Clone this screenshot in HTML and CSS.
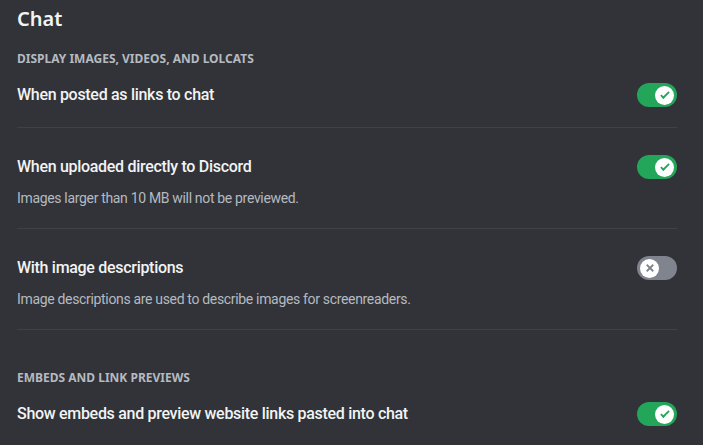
FILE: index.html
```html
<!DOCTYPE html>
<html lang="en">
<head>
<meta charset="utf-8">
<title>Chat settings</title>
<link rel="stylesheet" href="styles.css">
</head>
<body>
<main class="page">
  <h2 class="page-title">Chat</h2>

  <h5 class="section-title">Display images, videos, and lolcats</h5>

  <div class="setting">
    <div class="setting-row">
      <span class="setting-label">When posted as links to chat</span>
      <span class="switch on">
        <span class="knob">
          <svg class="knob-icon" viewBox="0 0 20 20"><path fill="#23a55a" d="M7.9 14.85L6.3 13.26L14.31 5.26L15.9 6.85L7.9 14.85Z"/><path fill="#23a55a" d="M4.09 11.09L5.68 9.5L9.45 13.27L7.86 14.86L4.09 11.09Z"/></svg>
        </span>
      </span>
    </div>
    <div class="divider"></div>
  </div>

  <div class="setting">
    <div class="setting-row">
      <span class="setting-label">When uploaded directly to Discord</span>
      <span class="switch on">
        <span class="knob">
          <svg class="knob-icon" viewBox="0 0 20 20"><path fill="#23a55a" d="M7.9 14.85L6.3 13.26L14.31 5.26L15.9 6.85L7.9 14.85Z"/><path fill="#23a55a" d="M4.09 11.09L5.68 9.5L9.45 13.27L7.86 14.86L4.09 11.09Z"/></svg>
        </span>
      </span>
    </div>
    <p class="setting-desc">Images larger than 10 MB will not be previewed.</p>
    <div class="divider"></div>
  </div>

  <div class="setting">
    <div class="setting-row">
      <span class="setting-label">With image descriptions</span>
      <span class="switch off">
        <span class="knob">
          <svg class="knob-icon" viewBox="0 0 20 20"><path fill="#80848e" d="M5.13 6.73L6.72 5.14L14.86 13.27L13.26 14.86L5.13 6.73Z"/><path fill="#80848e" d="M13.27 5.14L14.86 6.73L6.73 14.86L5.14 13.27L13.27 5.14Z"/></svg>
        </span>
      </span>
    </div>
    <p class="setting-desc">Image descriptions are used to describe images for screenreaders.</p>
    <div class="divider"></div>
  </div>

  <h5 class="section-title section-gap">Embeds and link previews</h5>

  <div class="setting">
    <div class="setting-row">
      <span class="setting-label">Show embeds and preview website links pasted into chat</span>
      <span class="switch on">
        <span class="knob">
          <svg class="knob-icon" viewBox="0 0 20 20"><path fill="#23a55a" d="M7.9 14.85L6.3 13.26L14.31 5.26L15.9 6.85L7.9 14.85Z"/><path fill="#23a55a" d="M4.09 11.09L5.68 9.5L9.45 13.27L7.86 14.86L4.09 11.09Z"/></svg>
        </span>
      </span>
    </div>
  </div>
</main>
</body>
</html>
```

FILE: styles.css
```css
* { box-sizing: border-box; }

html, body {
  margin: 0;
  padding: 0;
  background: #313338;
  height: 100%;
  overflow: hidden;
}

body {
  font-family: "Roboto", "Noto Sans", sans-serif;
  color: #f2f3f5;
}

.page {
  padding: 7px 26px 0 17px;
}

.page-title {
  margin: 0 0 20px;
  font-family: "Noto Sans", sans-serif;
  font-size: 20px;
  line-height: 24px;
  font-weight: 600;
  color: #f2f3f5;
}

.section-title {
  margin: 0 0 16px;
  font-family: "Noto Sans", sans-serif;
  font-size: 12px;
  line-height: 16px;
  font-weight: 700;
  text-transform: uppercase;
  color: #b5bac1;
}

.section-gap {
  margin-top: 40px;
}

.setting + .setting {
  margin-top: 27px;
}

.setting-row {
  display: flex;
  align-items: center;
  justify-content: space-between;
  height: 24px;
}

.setting-label {
  font-size: 16px;
  line-height: 24px;
  font-weight: 500;
  letter-spacing: -0.3px;
  color: #f2f3f5;
}

.setting-desc {
  margin: 9px 0 0;
  font-size: 14px;
  line-height: 20px;
  letter-spacing: -0.33px;
  color: #b5bac1;
}

.divider {
  margin-top: 20px;
  height: 1px;
  background: #3f4147;
}

.switch {
  display: flex;
  align-items: center;
  width: 40px;
  height: 24px;
  padding: 2px 3px;
  border-radius: 12px;
  flex-shrink: 0;
}

.switch.on {
  background: #23a55a;
  justify-content: flex-end;
}

.switch.off {
  background: #80848e;
  justify-content: flex-start;
}

.knob {
  display: flex;
  align-items: center;
  justify-content: center;
  width: 19px;
  height: 19px;
  border-radius: 50%;
  background: #ffffff;
}

.knob-icon {
  width: 16px;
  height: 16px;
}
```
